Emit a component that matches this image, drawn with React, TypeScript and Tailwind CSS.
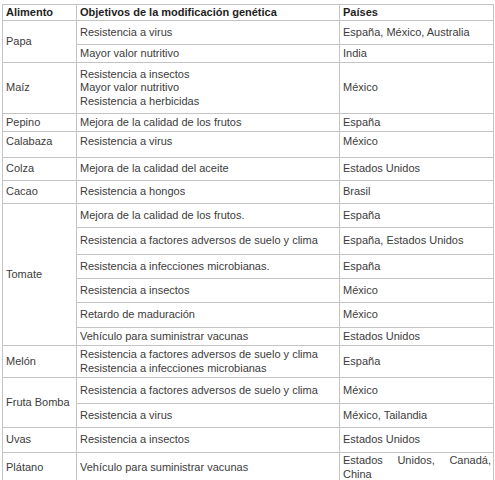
import React from "react";

const td = "border border-[#c4c4c4] px-[3px] py-0 align-middle";

export default function App() {
  return (
    <div className="w-[495px] h-[480px] overflow-hidden bg-white pl-[2px] pt-[4px]" style={{ fontFamily: '"Liberation Sans", Arial, sans-serif' }}>
      <table className="border-collapse text-[11px] leading-[13.5px] text-[#3c3c3c] table-fixed w-[491px]">
        <colgroup>
          <col className="w-[74px]" />
          <col className="w-[263px]" />
          <col className="w-[154px]" />
        </colgroup>
        <tbody>
          <tr>
            <td className={`${td} h-[16px] font-bold text-[#1e1e1e]`}>Alimento</td>
            <td className={`${td} font-bold text-[#1e1e1e]`}>Objetivos de la modificación genética</td>
            <td className={`${td} font-bold text-[#1e1e1e]`}>Países</td>
          </tr>
          <tr>
            <td className={td} rowSpan={2}>Papa</td>
            <td className={`${td} h-[24px]`}>Resistencia a virus</td>
            <td className={td}>España, México, Australia</td>
          </tr>
          <tr>
            <td className={`${td} h-[18px]`}>Mayor valor nutritivo</td>
            <td className={td}>India</td>
          </tr>
          <tr>
            <td className={td}>Maíz</td>
            <td className={`${td} h-[51px]`}>
              Resistencia a insectos
              <br />
              Mayor valor nutritivo
              <br />
              Resistencia a herbicidas
            </td>
            <td className={td}>México</td>
          </tr>
          <tr>
            <td className={`${td} h-[18px]`}>Pepino</td>
            <td className={td}>Mejora de la calidad de los frutos</td>
            <td className={td}>España</td>
          </tr>
          <tr>
            <td className={`${td} h-[26px] !align-top pt-[3px]`}>Calabaza</td>
            <td className={`${td} !align-top pt-[3px]`}>Resistencia a virus</td>
            <td className={`${td} !align-top pt-[3px]`}>México</td>
          </tr>
          <tr>
            <td className={`${td} h-[23px]`}>Colza</td>
            <td className={td}>Mejora de la calidad del aceite</td>
            <td className={td}>Estados Unidos</td>
          </tr>
          <tr>
            <td className={`${td} h-[23px]`}>Cacao</td>
            <td className={td}>Resistencia a hongos</td>
            <td className={td}>Brasil</td>
          </tr>
          <tr>
            <td className={td} rowSpan={6}>Tomate</td>
            <td className={`${td} h-[24px]`}>Mejora de la calidad de los frutos.</td>
            <td className={td}>España</td>
          </tr>
          <tr>
            <td className={`${td} h-[27px]`}>Resistencia a factores adversos de suelo y clima</td>
            <td className={td}>España, Estados Unidos</td>
          </tr>
          <tr>
            <td className={`${td} h-[24px]`}>Resistencia a infecciones microbianas.</td>
            <td className={td}>España</td>
          </tr>
          <tr>
            <td className={`${td} h-[24px]`}>Resistencia a insectos</td>
            <td className={td}>México</td>
          </tr>
          <tr>
            <td className={`${td} h-[25px]`}>Retardo de maduración</td>
            <td className={td}>México</td>
          </tr>
          <tr>
            <td className={`${td} h-[18px]`}>Vehículo para suministrar vacunas</td>
            <td className={td}>Estados Unidos</td>
          </tr>
          <tr>
            <td className={td}>Melón</td>
            <td className={`${td} h-[32px]`}>
              Resistencia a factores adversos de suelo y clima
              <br />
              Resistencia a infecciones microbianas
            </td>
            <td className={td}>España</td>
          </tr>
          <tr>
            <td className={td} rowSpan={2}>Fruta Bomba</td>
            <td className={`${td} h-[26px]`}>Resistencia a factores adversos de suelo y clima</td>
            <td className={td}>México</td>
          </tr>
          <tr>
            <td className={`${td} h-[24px]`}>Resistencia a virus</td>
            <td className={td}>México, Tailandia</td>
          </tr>
          <tr>
            <td className={`${td} h-[25px]`}>Uvas</td>
            <td className={td}>Resistencia a insectos</td>
            <td className={td}>Estados Unidos</td>
          </tr>
          <tr>
            <td className={`${td} h-[30px]`}>Plátano</td>
            <td className={td}>Vehículo para suministrar vacunas</td>
            <td className={`${td} text-justify pr-[2px]`}>Estados Unidos, Canadá, China</td>
          </tr>
        </tbody>
      </table>
    </div>
  );
}
